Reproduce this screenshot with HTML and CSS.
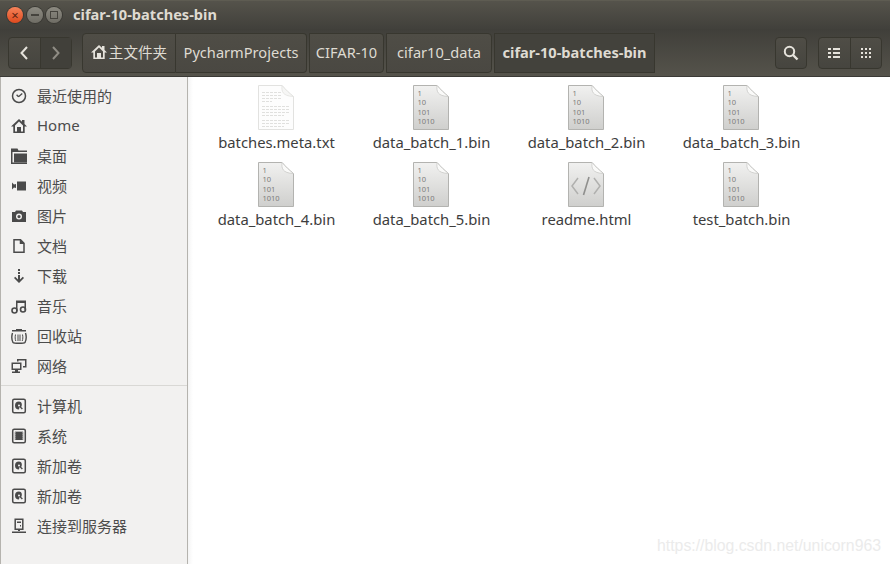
FILE: index.html
```html
<!DOCTYPE html>
<html lang="zh">
<head>
    <meta charset="UTF-8">
    <title>cifar-10-batches-bin</title>
    <link rel="stylesheet" href="styles.css">
</head>
<body>
    <svg class="defs" width="0" height="0">
        <symbol id="i-home" viewBox="0 0 16 16"><path fill-rule="evenodd" d="M8 1 0 8.500H2.300V15H13.700V8.500H16L13.500 6V2H11V3.800ZM8 3.500 12 7.500V13.500H10V9H6V13.500H4V7.500Z"/></symbol>
        <symbol id="i-clock" viewBox="0 0 16 16"><circle cx="8" cy="8" r="6.500" fill="none" stroke="currentColor" stroke-width="1.500"/><path d="M7.500 8.800 11.300 5.500M7.500 8.800 5.600 6.800" fill="none" stroke="currentColor" stroke-width="1.300"/></symbol>
        <symbol id="i-folder" viewBox="0 0 16 16"><path d="M0 0.500H6.500L7.500 2.500H16V4H1.500V14.500H16V16H0Z"/><path d="M3 5.500H16V14.500H3Z"/></symbol>
        <symbol id="i-video" viewBox="0 0 16 16"><path d="M6 3.500H15V12.500H6Z"/><path d="M1 4.500 3 6.500 5 6V10L3 9.500 1 11.500Z"/></symbol>
        <symbol id="i-camera" viewBox="0 0 16 16"><path fill-rule="evenodd" d="M5 2.500H11L12 4H15V14H1V4H4ZM8 5.600A3 3 0 1 0 8 11.600 3 3 0 0 0 8 5.600ZM8 7A1.600 1.600 0 1 1 8 10.200 1.600 1.600 0 0 1 8 7Z"/></symbol>
        <symbol id="i-doc" viewBox="0 0 16 16"><path d="M3 1.700H9.500L13 5.200V14.300H3Z M9.500 1.700V5.200H13" fill="none" stroke="currentColor" stroke-width="1.500"/><path d="M9 1.500 13.500 6H9Z"/></symbol>
        <symbol id="i-down" viewBox="0 0 16 16"><path d="M7 1H9V3H7ZM7 4H9V6H7ZM7 7H9V11.500L11.800 8.700 13 10 8 15 3 10 4.200 8.700 7 11.500Z"/></symbol>
        <symbol id="i-music" viewBox="0 0 16 16"><path d="M5 2.500H15V12.200H13.500V5H6.500V13H5Z"/><circle cx="3.500" cy="12.500" r="2.500" fill="none" stroke="currentColor" stroke-width="1.600"/><circle cx="12" cy="11.500" r="2.500" fill="none" stroke="currentColor" stroke-width="1.600"/></symbol>
        <symbol id="i-trash" viewBox="0 0 16 16"><path d="M5 1H11V2H15V3.500H1V2H5Z"/><path d="M1.500 5C0.500 8 0.800 12 2 14.500 3 15.500 13 15.500 14 14.500 15.200 12 15.500 8 14.500 5" fill="none" stroke="currentColor" stroke-width="1.400"/><path d="M4.500 6.500C4 9 4 11 4.800 13M7 6.500V13M9 6.500V13M11.500 6.500C12 9 12 11 11.200 13" fill="none" stroke="currentColor"/></symbol>
        <symbol id="i-net" viewBox="0 0 16 16"><path fill-rule="evenodd" d="M0.500 4.500H10.500V12H7V13.500H9V15H1V13.500H4V12H0.500ZM2 6V10.500H9V6Z"/><path d="M6 1H15.500V9.500H12V8H14V2.500H7.500V3.500H6Z"/></symbol>
        <symbol id="i-disk" viewBox="0 0 16 16"><rect x="1.700" y="1.200" width="12.600" height="13.600" rx="1.500" fill="none" stroke="currentColor" stroke-width="1.500"/><path fill-rule="evenodd" d="M8 3.500A4 4 0 0 0 4 7.500 4 4 0 0 0 8 11.500L8.500 9 10.800 11.500 11.900 10.500 10.200 9C11.500 7 11 3.500 8 3.500ZM8 6.500A1 1 0 1 1 8 8.500 1 1 0 0 1 8 6.500Z"/></symbol>
        <symbol id="i-chip" viewBox="0 0 16 16"><rect x="1.700" y="1.200" width="12.600" height="13.600" rx="1.500" fill="none" stroke="currentColor" stroke-width="1.500"/><path d="M4.500 4H11.500V12H4.500Z"/><path d="M5 3V13M7 3V13M9 3V13M11 3V13M3.500 5H12.500M3.500 7H12.500M3.500 9H12.500M3.500 11H12.500" stroke="currentColor" stroke-width=".7" stroke-dasharray="1 1"/></symbol>
        <symbol id="i-server" viewBox="0 0 16 16"><path d="M4.200 1.200H11.800V11.300H4.200Z" fill="none" stroke="currentColor" stroke-width="1.500"/><path d="M6 3.500H10V5H6ZM9 7H10V8.500H9ZM7 11H9V13H7ZM1 13.500H15V15H1Z"/></symbol>

        <linearGradient id="grey" x1="0" y1="0" x2="0" y2="1"><stop offset="0" stop-color="#f1f1f0"/><stop offset="1" stop-color="#cfcfcd"/></linearGradient>
        <symbol id="sheet" viewBox="0 0 36 45">
            <path d="M.5 .5H24C28 5 31 8 35.500 11.500V44.500H.5Z" fill="url(#grey)" stroke="#b3b3b0"/>
            <path d="M24 .5C23.500 6 24 11 35.500 11.500 31 8 28 5 24 .5Z" fill="#fafaf9" stroke="#c9c9c7" stroke-width=".8"/>
        </symbol>
    </svg>

    <div class="window">
        <div class="titlebar">
            <span class="wbtn wbtn-close">×</span>
            <span class="wbtn wbtn-min"><i class="min-mark"></i></span>
            <span class="wbtn wbtn-max"><i class="max-mark"></i></span>
            <span class="title">cifar-10-batches-bin</span>
        </div>

        <div class="toolbar">
            <div class="btn-group nav-group">
                <div class="tbtn tbtn-back"><svg width="12" height="16" viewBox="0 0 12 16"><path d="M9 2 3.500 8 9 14" fill="none" stroke="#e6e3dc" stroke-width="2"/></svg></div>
                <div class="tbtn tbtn-fwd"><svg width="12" height="16" viewBox="0 0 12 16"><path d="M3 2 8.500 8 3 14" fill="none" stroke="#8f8c84" stroke-width="2"/></svg></div>
            </div>
            <div class="pathbar">
                <div class="seg seg-home"><svg class="home-ico" width="16" height="16"><use href="#i-home"/></svg>主文件夹</div>
                <div class="seg seg-py">PycharmProjects</div>
                <div class="seg seg-cifar">CIFAR-10</div>
                <div class="seg seg-data">cifar10_data</div>
                <div class="seg seg-current">cifar-10-batches-bin</div>
            </div>
            <div class="tools">
                <div class="btn-group search-btn"><svg width="16" height="16" viewBox="0 0 16 16"><circle cx="6.500" cy="6.500" r="4.700" fill="none" stroke="#e6e3dc" stroke-width="2"/><path d="M10 10 14.500 14.500" stroke="#e6e3dc" stroke-width="2.400"/></svg></div>
                <div class="btn-group view-group">
                    <div class="tbtn tbtn-list"><svg width="12" height="12" viewBox="0 0 12 12"><path d="M0 1H3V3H0ZM5 1H12V3H5ZM0 5H3V7H0ZM5 5H12V7H5ZM0 9H3V11H0ZM5 9H12V11H5Z" fill="#e6e3dc"/></svg></div>
                    <div class="tbtn tbtn-grid"><svg width="12" height="12" viewBox="0 0 12 12"><path d="M1 1H3V3H1ZM5 1H7V3H5ZM9 1H11V3H9ZM1 5H3V7H1ZM5 5H7V7H5ZM9 5H11V7H9ZM1 9H3V11H1ZM5 9H7V11H5ZM9 9H11V11H9Z" fill="#e6e3dc"/></svg></div>
                </div>
            </div>
        </div>

        <div class="main">
            <div class="sidebar">
                <div class="side-row"><svg class="side-ico"><use href="#i-clock"/></svg>最近使用的</div>
                <div class="side-row"><svg class="side-ico"><use href="#i-home"/></svg>Home</div>
                <div class="side-row"><svg class="side-ico"><use href="#i-folder"/></svg>桌面</div>
                <div class="side-row"><svg class="side-ico"><use href="#i-video"/></svg>视频</div>
                <div class="side-row"><svg class="side-ico"><use href="#i-camera"/></svg>图片</div>
                <div class="side-row"><svg class="side-ico"><use href="#i-doc"/></svg>文档</div>
                <div class="side-row"><svg class="side-ico"><use href="#i-down"/></svg>下载</div>
                <div class="side-row"><svg class="side-ico"><use href="#i-music"/></svg>音乐</div>
                <div class="side-row"><svg class="side-ico"><use href="#i-trash"/></svg>回收站</div>
                <div class="side-row"><svg class="side-ico"><use href="#i-net"/></svg>网络</div>
                <div class="side-sep"></div>
                <div class="side-row"><svg class="side-ico"><use href="#i-disk"/></svg>计算机</div>
                <div class="side-row"><svg class="side-ico"><use href="#i-chip"/></svg>系统</div>
                <div class="side-row"><svg class="side-ico"><use href="#i-disk"/></svg>新加卷</div>
                <div class="side-row"><svg class="side-ico"><use href="#i-disk"/></svg>新加卷</div>
                <div class="side-row"><svg class="side-ico"><use href="#i-server"/></svg>连接到服务器</div>
            </div>

            <div class="files">
                <div class="file">
                    <svg class="file-ico" viewBox="0 0 36 45">
                        <path d="M.5 .5H24C28 5 31 8 35.500 11.500V44.500H.5Z" fill="#fdfdfd" stroke="#e2e2e0"/>
                        <path d="M24 .5C23.500 6 24 11 35.500 11.500 31 8 28 5 24 .5Z" fill="#f6f6f5" stroke="#e2e2e0" stroke-width=".8"/>
                        <path d="M4 7.500H24M4 10.500H24M4 13.500H24M4 16.500H14M4 21.500H31M4 24.500H31M4 27.500H31M4 30.500H26M4 35.500H31M4 38.500H31M4 41.500H26" stroke="#e0e0de" stroke-dasharray="3 1"/>
                    </svg>
                    <div class="file-name">batches.meta.txt</div>
                </div>
                <div class="file">
                    <svg class="file-ico" viewBox="0 0 36 45"><use href="#sheet"/><text class="bits" x="4.500" y="11">1</text><text class="bits" x="4.500" y="20">10</text><text class="bits" x="4.500" y="30">101</text><text class="bits" x="4.500" y="39">1010</text></svg>
                    <div class="file-name">data_batch_1.bin</div>
                </div>
                <div class="file">
                    <svg class="file-ico" viewBox="0 0 36 45"><use href="#sheet"/><text class="bits" x="4.500" y="11">1</text><text class="bits" x="4.500" y="20">10</text><text class="bits" x="4.500" y="30">101</text><text class="bits" x="4.500" y="39">1010</text></svg>
                    <div class="file-name">data_batch_2.bin</div>
                </div>
                <div class="file">
                    <svg class="file-ico" viewBox="0 0 36 45"><use href="#sheet"/><text class="bits" x="4.500" y="11">1</text><text class="bits" x="4.500" y="20">10</text><text class="bits" x="4.500" y="30">101</text><text class="bits" x="4.500" y="39">1010</text></svg>
                    <div class="file-name">data_batch_3.bin</div>
                </div>
                <div class="file">
                    <svg class="file-ico" viewBox="0 0 36 45"><use href="#sheet"/><text class="bits" x="4.500" y="11">1</text><text class="bits" x="4.500" y="20">10</text><text class="bits" x="4.500" y="30">101</text><text class="bits" x="4.500" y="39">1010</text></svg>
                    <div class="file-name">data_batch_4.bin</div>
                </div>
                <div class="file">
                    <svg class="file-ico" viewBox="0 0 36 45"><use href="#sheet"/><text class="bits" x="4.500" y="11">1</text><text class="bits" x="4.500" y="20">10</text><text class="bits" x="4.500" y="30">101</text><text class="bits" x="4.500" y="39">1010</text></svg>
                    <div class="file-name">data_batch_5.bin</div>
                </div>
                <div class="file">
                    <svg class="file-ico" viewBox="0 0 36 45"><use href="#sheet"/><path d="M10 16 4 24 10 32M26 16 32 24 26 32" fill="none" stroke="#b0b0ae" stroke-width="1.500"/><path d="M21 15 15.500 33" fill="none" stroke="#8f8f8d" stroke-width="1.600"/></svg>
                    <div class="file-name">readme.html</div>
                </div>
                <div class="file">
                    <svg class="file-ico" viewBox="0 0 36 45"><use href="#sheet"/><text class="bits" x="4.500" y="11">1</text><text class="bits" x="4.500" y="20">10</text><text class="bits" x="4.500" y="30">101</text><text class="bits" x="4.500" y="39">1010</text></svg>
                    <div class="file-name">test_batch.bin</div>
                </div>
            </div>
            <div class="watermark">https://blog.csdn.net/unicorn963</div>
        </div>
    </div>
</body>
</html>
```

FILE: styles.css
```css
html, body {
    margin: 0;
    padding: 0;
}
body {
    width: 890px;
    height: 564px;
    overflow: hidden;
    font-family: "Noto Sans", "Noto Sans CJK SC", sans-serif;
}
.defs {
    position: absolute;
}
.window {
    display: flex;
    flex-direction: column;
    height: 564px;
}

/* title bar */
.titlebar {
    display: flex;
    align-items: center;
    height: 29px;
    padding-left: 7px;
    box-sizing: border-box;
    background: linear-gradient(#55534b, #41403b);
    border-top: 1px solid #5e5c52;
}
.wbtn {
    display: flex;
    align-items: center;
    justify-content: center;
    width: 16px;
    height: 16px;
    border-radius: 50%;
    margin-right: 3.500px;
    background: linear-gradient(#8c8a81, #6f6d65);
    box-shadow: 0 0 0 1px #3a3934;
}
.wbtn-close {
    background: linear-gradient(#f5835a, #df4a1e);
    color: #5a2412;
    font-size: 13px;
    line-height: 16px;
}
.min-mark {
    width: 8px;
    height: 2px;
    background: #45433d;
}
.max-mark {
    width: 6px;
    height: 6px;
    border: 1px solid #45433d;
}
.title {
    margin-left: 7.500px;
    padding-bottom: 2px;
    font-size: 14.600px;
    font-weight: 700;
    color: #dfdbd2;
}

/* toolbar */
.toolbar {
    display: flex;
    align-items: center;
    height: 48px;
    padding: 0 8px;
    box-sizing: border-box;
    background: linear-gradient(#403f3a, #55534b);
    border-bottom: 1px solid #3b3a36;
}
.btn-group {
    display: flex;
    height: 32px;
    box-sizing: border-box;
    border: 1px solid #38372f;
    border-radius: 4px;
    background: linear-gradient(#4f4d46, #46453f);
}
.tbtn {
    display: flex;
    align-items: center;
    justify-content: center;
    flex: 1;
}
.nav-group {
    width: 64px;
}
.tbtn-fwd {
    border-left: 1px solid #38372f;
    background: #41403a;
}
.pathbar {
    display: flex;
    align-items: stretch;
    height: 40px;
    margin-left: 10px;
    color: #dfdbd2;
    font-size: 14.600px;
}
.seg {
    display: flex;
    align-items: center;
    justify-content: center;
    box-sizing: border-box;
    border: 1px solid #38372f;
    padding-bottom: 2px;
    background: linear-gradient(#4f4d46, #4a4842);
    margin-right: 2px;
    border-radius: 0 4px 4px 0;
    white-space: nowrap;
}
.seg-home { width: 94px; border-radius: 4px 0 0 4px; margin-right: 0; }
.seg-py { width: 131px; border-left: 0; }
.seg-cifar { width: 75px; }
.seg-data { width: 106px; }
.seg-current {
    width: 161px;
    margin-right: 0;
    border-radius: 0;
    font-weight: 700;
    background: #43423c;
}
.home-ico {
    fill: #e6e3dc;
    margin-right: 2px;
}
.tools {
    display: flex;
    margin-left: auto;
    gap: 11px;
}
.search-btn {
    width: 32px;
    align-items: center;
    justify-content: center;
}
.view-group {
    width: 64px;
}
.tbtn-grid {
    border-left: 1px solid #38372f;
}

/* sidebar + content */
.main {
    position: relative;
    display: flex;
    flex: 1;
    min-height: 0;
}
.sidebar {
    width: 188px;
    box-sizing: border-box;
    padding-top: 3px;
    background: #f2f1f0;
    border-left: 1px solid #b5b3ae;
    border-right: 1px solid #b5b3ae;
    color: #4c4c4c;
    font-size: 15px;
}
.side-row {
    display: flex;
    align-items: center;
    height: 30px;
    padding-left: 10px;
}
.side-ico {
    width: 16px;
    height: 16px;
    margin: 2px 10px 0 0;
    fill: #4a4a4a;
    color: #4a4a4a;
    flex: none;
}
.side-sep {
    height: 1px;
    margin: 5px 0 4px;
    background: #d9d8d5;
}
.files {
    flex: 1;
    display: grid;
    grid-template-columns: repeat(4, 155px);
    grid-auto-rows: 77px;
    align-content: start;
    padding: 8px 0 0 11px;
    background: linear-gradient(90deg, #f4f4f4, #fff 5px);
}
.file {
    display: flex;
    flex-direction: column;
    align-items: center;
}
.file-ico {
    width: 36px;
    height: 45px;
    margin-right: 2px;
}
.file-name {
    margin-top: 2px;
    font-size: 14.800px;
    color: #3d3d3d;
    white-space: nowrap;
}
.bits {
    font-size: 7.500px;
    font-family: "Noto Sans", sans-serif;
    fill: #7c7c7a;
}
.watermark {
    position: absolute;
    right: 9px;
    bottom: 9px;
    font-family: "Liberation Sans", sans-serif;
    font-size: 15.800px;
    color: #ebebeb;
}
```
